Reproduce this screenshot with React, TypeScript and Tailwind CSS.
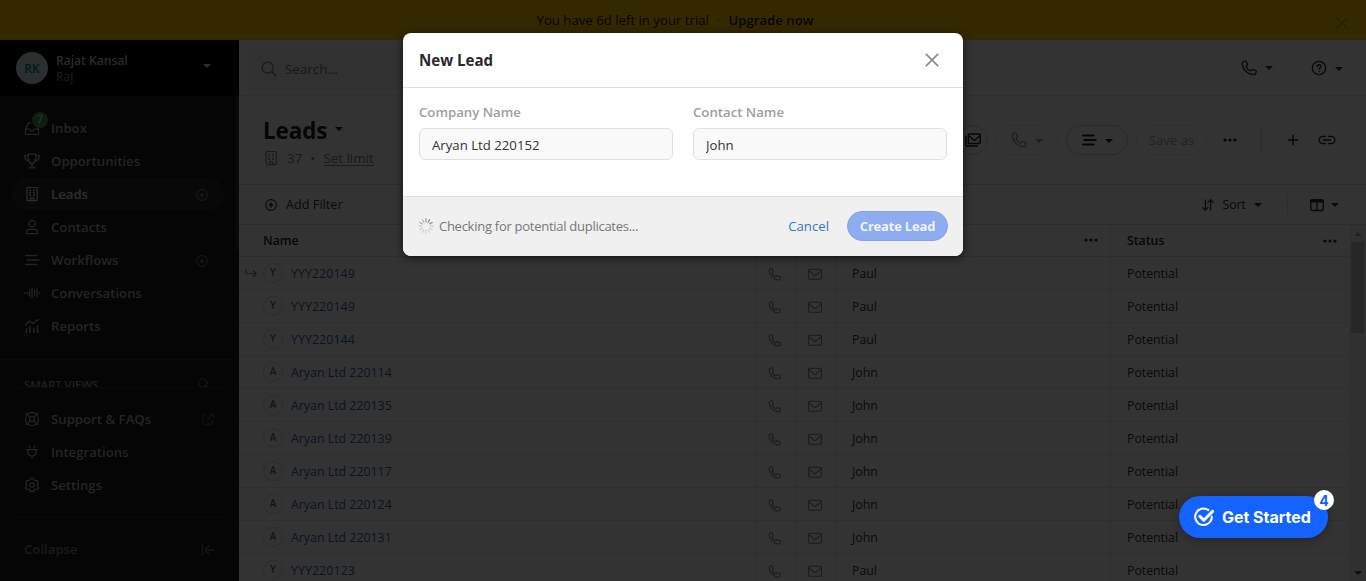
import React from 'react';

type IconProps = { className?: string };

function Svg({ className = 'size-4', children, sw = 1.2 }: { className?: string; children: React.ReactNode; sw?: number }) {
  return (
    <svg viewBox="0 0 16 16" fill="none" stroke="currentColor" strokeWidth={sw} strokeLinecap="round" strokeLinejoin="round" className={`shrink-0 ${className}`}>
      {children}
    </svg>
  );
}

const Caret = ({ className = '' }: IconProps) => (
  <svg viewBox="0 0 8 4" className={`h-1 w-2 shrink-0 ${className}`} fill="currentColor"><path d="M0 0h8L4 4z" /></svg>
);
const Phone = ({ className }: IconProps) => (
  <Svg className={className} sw={1.3}>
    <path d="M2.200 1.700 4 1c.5-.2 1 0 1.200.5l1.200 2.800c.2.400.1.900-.3 1.200L5 6.400c.8 1.900 2.600 3.700 4.600 4.600l1-1.200c.3-.4.800-.5 1.200-.3l2.800 1.200c.5.200.7.700.6 1.200l-.7 1.900c-.2.600-.6.900-1.200.9C6.700 14.700 1.300 9.300 1.300 2.900c0-.6.4-1 .9-1.200Z" />
  </Svg>
);
const Mail = () => (
  <Svg className="h-3.5 w-3.5"><rect x=".7" y="2.600" width="14.600" height="11.400" rx="1.300" /><path d="m1.200 4.500 6 5q.8.500 1.600 0l6-5" /></Svg>
);
const MailStack = () => (
  <Svg sw={1.5}><rect x="3.300" y="2" width="12" height="9.500" rx="1" /><path d="m4 4 4.600 4q.7.600 1.400 0l4.600-4M.8 4.500v8q0 1.500 1.500 1.500h10.200" /></Svg>
);
const Building = ({ className }: IconProps) => (
  <Svg className={className}>
    <rect x="3" y="1.500" width="10.200" height="13.200" rx="1.200" />
    <path d="M6.500 14.700v-2.900h3.200v2.900" />
    <path d="M5 4.500h2M9 4.500h2M5 6.900h2M9 6.900h2M5 9.300h2M9 9.300h2" strokeLinecap="butt" strokeWidth="1.400" />
  </Svg>
);
const PlusCircle = ({ className = 'size-3' }: IconProps) => (
  <Svg className={className} sw={1.500}><circle cx="8" cy="8" r="7.200" /><path d="M8 5.500v5M5.500 8h5" strokeWidth="2" /></Svg>
);
const Dots = () => (
  <svg viewBox="0 0 14 4" className="h-1 w-3.5 shrink-0" fill="currentColor"><circle cx="2" cy="2" r="1.600" /><circle cx="7" cy="2" r="1.600" /><circle cx="12" cy="2" r="1.600" /></svg>
);
const Lines = ({ sw = 1.6 }: { sw?: number }) => <Svg sw={sw}><path d="M1.800 3.500h11M3.300 8h11.500M1.800 12.500h11" /></Svg>;
const Search = ({ className }: IconProps) => <Svg className={className} sw={1.300}><circle cx="6.700" cy="6.700" r="5.600" /><path d="m10.800 10.800 4.300 4.300" /></Svg>;

const icons = {
  inbox: <Svg><path d="M7 2.800H4.300L1.500 9.200v4.300q0 .8.800.8h11.400q.8 0 .8-.8V9.200h-3.300q-.5 0-.7.600-.4.900-1 .9h-3q-.6 0-1-.9-.2-.6-.7-.6H1.500M14.500 9.200 13.200 6" /></Svg>,
  trophy: <Svg sw={1.400}><path d="M4.200 1.300h7.600v4.200c0 3-1.500 4.500-3.800 5-2.300-.5-3.800-2-3.800-5ZM4 2.600H.7c0 3.300 1.100 5 4.100 5.700M12 2.600h3.300c0 3.300-1.100 5-4.100 5.700M8 10.500v4M5.300 14.700h5.400" /></Svg>,
  building: <Building />,
  person: <Svg><circle cx="8" cy="4.600" r="3.200" /><path d="M2.300 14.700v-1.200c0-2.400 1.900-3.200 3.700-3.200h4c1.800 0 3.700.8 3.700 3.200v1.200Z" /></Svg>,
  lines: <Lines />,
  wave: <Svg><path d="M.6 7.500v1M3 7.200v1.600M5.500 5v6M8 2.800v10.400M10.500 5.500v5M13 4.200v7.600M15.400 7.500v1" strokeWidth="1.300" /></Svg>,
  chart: <Svg><path d="m1.500 7 4-4 3.300 2.500 5.700-4M2.500 11v3.500M6 8.500v6M9.800 10.500v4M13.500 8v6.500" strokeWidth="1.500" /></Svg>,
  lifebuoy: <Svg><circle cx="8" cy="8" r="6.600" /><rect x="5.600" y="5.600" width="4.800" height="4.800" rx="1.300" /><path d="M2 2l3.800 3.800M14 2l-3.800 3.800M2 14l3.800-3.800M14 14l-3.800-3.800" /></Svg>,
  plug: <Svg><path d="M5.500 1.500v2.300M10.500 1.500v2.300M3 5.700h10M4 5.700v2.500c0 2.400 1.600 3.700 4 3.700s4-1.300 4-3.700V5.700M8 12v2.600" /></Svg>,
  gear: <Svg><circle cx="8" cy="8" r="2.200" /><path d="M6.600 1.300h2.800l.6 1.700 1.300.7 1.800-.3 1.400 2.300-1.200 1.400v1.800l1.200 1.400-1.400 2.300-1.800-.3-1.300.7-.6 1.700H6.600L6 13l-1.300-.7-1.800.3-1.400-2.300 1.200-1.400V7.100L1.500 5.700l1.400-2.300 1.800.3L6 3Z" /></Svg>,
};

function NavItem({ icon, label, active, plus, external, badge }: { icon: React.ReactNode; label: string; active?: boolean; plus?: boolean; external?: boolean; badge?: string }) {
  return (
    <div className={`flex h-8 items-center rounded-full pr-4 pl-3 ${active ? 'bg-[#2b2b2b] text-[#e0e0e0]' : 'text-[#b5b5b5]'}`}>
      <span className="relative flex">
        {icon}
        {badge && <span className="absolute -top-2 left-2 flex size-4 items-center justify-center rounded-full bg-[#3a9b58] text-[10.500px] font-semibold text-[#dcf0e0]">{badge}</span>}
      </span>
      <span className="ml-[11px] pt-0.5 text-[13.200px] font-semibold whitespace-nowrap">{label}</span>
      {plus && <PlusCircle className="mt-0.5 ml-auto size-3 text-[#757575]" />}
      {external && <Svg className="-mr-[3px] ml-auto size-3 text-[#555]" sw={1.600}><path d="M6.500 2H2.800Q1.200 2 1.200 3.600v9.600q0 1.600 1.600 1.600h9.600q1.600 0 1.600-1.600V9.500M6.500 9.500 15 1M9.500 1H15v5.500" /></Svg>}
    </div>
  );
}

function Sidebar() {
  return (
    <aside className="flex w-[239px] shrink-0 flex-col bg-[#191919]">
      <div className="flex h-14 items-center bg-black pr-7 pl-4">
        <div className="flex size-8 items-center justify-center rounded-full bg-[#d4e8e8] pt-0.5 text-[12px] font-semibold text-[#177a78]">RK</div>
        <div className="ml-2 flex flex-col pt-0.5 text-[12.200px] leading-4">
          <span className="font-semibold tracking-[-0.050px] text-[#d0d0d0]">Rajat Kansal</span>
          <span className="text-[#8c8c8c]">Raj</span>
        </div>
        <Caret className="mb-1 ml-auto text-[#e0e0e0]" />
      </div>
      <div className="flex h-[291px] overflow-hidden">
        <div className="flex w-[236px] shrink-0 flex-col">
          <nav className="flex flex-col gap-px px-3 pt-4">
            <NavItem icon={icons.inbox} label="Inbox" badge="7" />
            <NavItem icon={icons.trophy} label="Opportunities" />
            <NavItem icon={icons.building} label="Leads" active plus />
            <NavItem icon={icons.person} label="Contacts" />
            <NavItem icon={icons.lines} label="Workflows" plus />
            <NavItem icon={icons.wave} label="Conversations" />
            <NavItem icon={icons.chart} label="Reports" />
          </nav>
          <div className="mt-[17px] border-t border-[#333]" />
          <div className="flex items-start justify-between pt-[17px] pr-[26px] pl-6 text-[11.300px] leading-4 font-semibold text-[#a0a0a0]">
            SMART VIEWS
            <Search className="mt-px size-3 text-[#808080]" />
          </div>
        </div>
        <div className="h-[154px] w-[3px] bg-[#333]" />
      </div>
      <div className="mx-3 border-t border-[#333]" />
      <nav className="flex flex-col gap-px px-3 pt-[15px]">
        <NavItem icon={icons.lifebuoy} label="Support & FAQs" external />
        <NavItem icon={icons.plug} label="Integrations" />
        <NavItem icon={icons.gear} label="Settings" />
      </nav>
      <div className="mx-3 mt-4 border-t border-[#333]" />
      <div className="flex flex-1 items-center justify-between pr-6 pl-6 text-[13.200px] font-semibold text-[#808080]">
        Collapse
        <Svg className="size-3.5 text-[#666]" sw={1.500}><path d="M1.500 2v12M15 8H4.500M9 3.500 4.500 8 9 12.500" /></Svg>
      </div>
    </aside>
  );
}

const rows: [string, string][] = [
  ['YYY220149', 'Paul'], ['YYY220149', 'Paul'], ['YYY220144', 'Paul'],
  ['Aryan Ltd 220114', 'John'], ['Aryan Ltd 220135', 'John'], ['Aryan Ltd 220139', 'John'],
  ['Aryan Ltd 220117', 'John'], ['Aryan Ltd 220124', 'John'], ['Aryan Ltd 220131', 'John'],
  ['YYY220123', 'Paul'],
];

function LeadsTable() {
  return (
    <div className="flex min-h-0 flex-1 overflow-hidden">
      <div className="flex w-[1110px] shrink-0 flex-col text-[12.300px]">
        <div className="grid h-8 shrink-0 grid-cols-[597px_275px_238px] border-b border-[#dedede] font-semibold text-[#262626]">
          <div className="flex items-center pt-px pl-6">Name</div>
          <div className="flex items-center justify-end border-r border-[#ececec] pr-3 pb-px"><Dots /></div>
          <div className="flex items-center justify-between pr-3 pl-4"><span className="pt-px">Status</span> <Dots /></div>
        </div>
        {rows.map(([name, contact], i) => (
          <div key={i} className="grid h-[33px] shrink-0 grid-cols-[517px_40px_40px_275px_238px] border-b border-[#ebebeb] text-[#333]">
            <div className="flex items-center border-r border-[#ebebeb]">
              <span className="flex w-6 items-center justify-center">
                {i === 0 && <Svg className="size-3 text-[#5580ad]" sw={1.500}><path d="M1 3v4.500Q1 9 2.500 9H15M11 5l4 4-4 4" /></Svg>}
              </span>
              <span className="flex size-5 items-center justify-center rounded-full border border-[#d9d9d9] text-[9.800px] font-semibold text-[#666]">{name[0]}</span>
              <span className={`ml-2 pt-0.5 text-[#336a9f] ${name.startsWith('Y') ? 'tracking-[0.110px]' : 'tracking-[0.030px]'}`}>{name}</span>
            </div>
            <div className="flex items-center justify-center border-r border-[#ebebeb] pt-0.5 pr-0.5 text-[#808080]"><Phone className="size-[13px]" /></div>
            <div className="flex items-center justify-center border-r border-[#ebebeb] pt-0.5 pr-0.5 text-[#808080]"><Mail /></div>
            <div className="flex items-center border-r border-[#ebebeb] pt-0.5 pl-4">{contact}</div>
            <div className="flex items-center pt-0.5 pl-4">Potential</div>
          </div>
        ))}
      </div>
      <div className="flex w-[17px] flex-col items-center bg-[#f1f1f1] pt-[7px] pb-1.5">
        <Caret className="rotate-180 text-[#a3a3a3]" />
        <div className="mt-1.5 h-[91px] w-[13px] bg-[#c1c1c1]" />
        <Caret className="mt-auto text-[#505050]" />
      </div>
    </div>
  );
}

function Main() {
  return (
    <main className="flex min-w-0 flex-1 flex-col bg-white text-[#333]">
      <header className="flex h-14 items-center border-b border-[#e8e8e8] pr-[23px] pl-2">
        <div className="mt-0.5 flex h-[42px] w-[320px] items-center rounded-lg bg-[#f6f6f6] pl-3.5 text-[#777]">
          <Search className="size-4" />
          <span className="ml-2 pt-0.5 text-[13.400px]">Search...</span>
        </div>
        <div className="ml-auto flex items-center gap-2"><Phone className="size-4" /><Caret /></div>
        <div className="ml-[38px] flex items-center gap-2">
          <Svg className="size-4" sw={1.300}><circle cx="8" cy="8" r="6.700" /><path d="M6.200 6.500c0-2.200 3.600-2.200 3.600 0C9.800 7.800 8 7.800 8 9.100M8 11.300v.1" strokeWidth="1.500" /></Svg>
          <Caret className="mt-0.5" />
        </div>
      </header>
      <section className="flex h-[89px] items-center border-b border-[#dcdcdc] pr-[30px] pl-6">
        <div className="flex flex-col pt-[3px]">
          <div className="flex items-center gap-2 text-[22.300px] leading-8 font-bold text-[#222]"><span className="pt-0.5 leading-[30px]">Leads</span> <Caret className="mb-0.5" /></div>
          <div className="flex items-center text-[13.400px] leading-6 text-[#858585]">
            <Building className="size-4" />
            <span className="ml-2">37</span>
            <span className="mx-2">•</span>
            <span className="underline underline-offset-2">Set limit</span>
          </div>
        </div>
        <div className="ml-auto flex items-center text-[#222]">
          <div className="flex size-[30px] items-center justify-center rounded-full border border-[#d0d0d0]"><MailStack /></div>
          <div className="ml-2 flex h-[30px] w-[62px] items-center justify-center gap-2 rounded-full border border-[#ececec] text-[#999]"><Phone className="size-4" /><Caret className="mt-0.5" /></div>
          <div className="ml-2 flex h-[30px] w-[62px] items-center justify-center gap-2 rounded-full border border-[#d0d0d0]"><Lines sw={1.8} /><Caret className="mt-0.5" /></div>
          <div className="ml-2 flex h-[30px] w-[71px] items-center justify-center rounded-full border border-[#ececec] pt-0.5 text-[13.200px] text-[#ababab]">Save as</div>
          <div className="ml-4 flex"><Dots /></div>
          <div className="ml-6 h-6 border-l border-[#ddd]" />
          <Svg className="ml-6 size-3.5" sw={1.700}><path d="M8 2.700v10.600M2.700 8h10.600" /></Svg>
          <Svg className="ml-[18px] size-[18px]" sw={1.200}><path d="M6.500 4.800H4.200a3.200 3.200 0 0 0 0 6.400h2.300M9.500 4.800h2.300a3.200 3.200 0 0 1 0 6.400H9.500M5 8h6" /></Svg>
        </div>
      </section>
      <section className="flex h-10 items-center border-b border-[#dcdcdc] pr-[27px] pl-[26px] text-[12.700px]">
        <PlusCircle className="size-3" />
        <span className="ml-[9px] pt-px">Add Filter</span>
        <Svg className="ml-auto size-3" sw={1.600}><path d="M4.500 1v14M1 11.500 4.500 15 8 11.500M11.500 15V1M8 4.500 11.500 1 15 4.500" /></Svg>
        <span className="ml-2 pt-px text-[12.300px]">Sort</span>
        <Caret className="ml-2" />
        <div className="mr-[22px] ml-[25px] h-5 border-l border-[#e0e0e0]" />
        <Svg className="size-3.5" sw={1.600}><rect x=".9" y="1.800" width="14.200" height="12.400" rx="1.300" /><path d="M1 3.700h14" strokeWidth="3" /><path d="M8 4v10" /></Svg>
        <Caret className="ml-[7px]" />
      </section>
      <LeadsTable />
    </main>
  );
}

function Field({ label, value }: { label: string; value: string }) {
  return (
    <label className="flex w-[254px] flex-col">
      <span className="text-[13.200px] leading-4 font-semibold text-[#9e9e9e]">{label}</span>
      <input readOnly value={value} className="mt-2 h-8 w-full rounded-md border border-[#dfdfdf] bg-[#f9f9f9] px-3 pt-0.5 text-[13.200px] text-[#333] outline-none" />
    </label>
  );
}

function Spinner() {
  return (
    <svg viewBox="-8 -8 16 16" className="size-4 shrink-0" strokeWidth="1.300" strokeLinecap="round">
      {Array.from({ length: 12 }, (_, i) => (
        <path key={i} d="M0-4.300V-7.200" transform={`rotate(${i * 30})`} stroke={i === 1 ? '#888' : i === 0 || i === 2 ? '#999' : i > 9 ? '#b5b5b5' : '#d2d2d2'} />
      ))}
    </svg>
  );
}

function NewLeadDialog() {
  return (
    <div role="dialog" className="flex h-[223px] w-[560px] flex-col overflow-hidden rounded-lg bg-white shadow-[0_2px_8px_rgba(0,0,0,0.6)]">
      <div className="flex h-[55px] items-center justify-between border-b border-[#e0e0e0] px-4">
        <h2 className="text-[15.100px] font-bold text-[#2a2a2a]">New Lead</h2>
        <Svg className="mr-[7px] size-4 text-[#8a8a8a]" sw={1.700}><path d="m2.300 2.300 11.400 11.400M13.700 2.300 2.300 13.700" /></Svg>
      </div>
      <div className="flex flex-1 gap-5 px-4 pt-4">
        <Field label="Company Name" value="Aryan Ltd 220152" />
        <Field label="Contact Name" value="John" />
      </div>
      <div className="flex h-[60px] items-center border-t border-[#e0e0e0] bg-[#f0f0f0] pr-[15px] pb-px pl-[15px]">
        <Spinner />
        <span className="ml-[5px] pt-px text-[13px] tracking-[-0.270px] text-[#777]">Checking for potential duplicates...</span>
        <button className="ml-auto pt-px text-[13.200px] text-[#337ab7]">Cancel</button>
        <button className="ml-[18px] h-[30px] w-[101px] rounded-full border border-[#83a3e6] bg-[#8eacf0] pt-px text-[13px] font-bold tracking-[-0.200px] text-[#edf2fd]">Create Lead</button>
      </div>
    </div>
  );
}

export default function App() {
  return (
    <div className="relative flex h-[581px] w-[1366px] flex-col overflow-hidden font-['Open_Sans',sans-serif]">
      <div className="relative flex h-10 shrink-0 items-center justify-center bg-[#ffc800] text-[13.200px] text-[#222]">
        <div className="mr-4 flex pt-0.5">You have 6d left in your trial<span className="mx-2 opacity-50">·</span><b className="font-semibold">Upgrade now</b></div>
        <Svg className="absolute top-[15px] right-4 size-4 text-[#c09700]" sw={1.300}><path d="m2.500 2.500 11 11M13.500 2.500l-11 11" /></Svg>
      </div>
      <div className="flex min-h-0 flex-1"><Sidebar /><Main /></div>
      <div className="absolute inset-0 flex items-start justify-center bg-black/80 pt-[33px]"><NewLeadDialog /></div>
      <button className="absolute top-[496px] left-[1179px] flex h-[42px] w-[149px] items-center rounded-full bg-[#1463ff] pl-[15px] font-[Inter,sans-serif] text-[16px] font-bold tracking-[-0.020px] text-white shadow-[0_2px_8px_rgba(0,0,0,0.3)]">
        <svg viewBox="0 0 20 20" className="size-5 shrink-0" fill="none" stroke="currentColor"><path d="M14.500 3.100A8.300 8.300 0 1 0 17.800 9.500" strokeWidth="2" strokeLinecap="round" /><path d="m5.800 9.300 4 4L18.700 4.300" strokeWidth="3" strokeLinecap="round" strokeLinejoin="round" /></svg>
        <span className="ml-2 whitespace-nowrap">Get Started</span>
        <span className="absolute -top-1.5 -right-1.5 flex size-5 items-center justify-center rounded-full bg-white pt-px text-[14px] text-[#1463ff]">4</span>
      </button>
    </div>
  );
}
